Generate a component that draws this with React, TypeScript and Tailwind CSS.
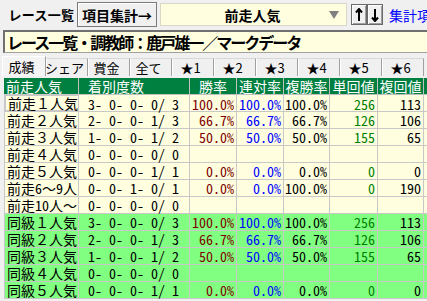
import React from "react";

type Row = {
  label: string;
  rec: string;
  win?: string;
  ren?: string;
  fuku?: string;
  tan?: string;
  fkv?: string;
  green?: boolean;
  selected?: boolean;
};

const rows: Row[] = [
  { label: "前走１人気", rec: "3- 0- 0- 0/ 3", win: "100.0%", ren: "100.0%", fuku: "100.0%", tan: "256", fkv: "113", selected: true },
  { label: "前走２人気", rec: "2- 0- 0- 1/ 3", win: "66.7%", ren: "66.7%", fuku: "66.7%", tan: "126", fkv: "106" },
  { label: "前走３人気", rec: "1- 0- 0- 1/ 2", win: "50.0%", ren: "50.0%", fuku: "50.0%", tan: "155", fkv: "65" },
  { label: "前走４人気", rec: "0- 0- 0- 0/ 0" },
  { label: "前走５人気", rec: "0- 0- 0- 1/ 1", win: "0.0%", ren: "0.0%", fuku: "0.0%", tan: "0", fkv: "0" },
  { label: "前走6〜9人", rec: "0- 0- 1- 0/ 1", win: "0.0%", ren: "0.0%", fuku: "100.0%", tan: "0", fkv: "190" },
  { label: "前走10人〜", rec: "0- 0- 0- 0/ 0" },
  { label: "同級１人気", rec: "3- 0- 0- 0/ 3", win: "100.0%", ren: "100.0%", fuku: "100.0%", tan: "256", fkv: "113", green: true },
  { label: "同級２人気", rec: "2- 0- 0- 1/ 3", win: "66.7%", ren: "66.7%", fuku: "66.7%", tan: "126", fkv: "106", green: true },
  { label: "同級３人気", rec: "1- 0- 0- 1/ 2", win: "50.0%", ren: "50.0%", fuku: "50.0%", tan: "155", fkv: "65", green: true },
  { label: "同級４人気", rec: "0- 0- 0- 0/ 0", green: true },
  { label: "同級５人気", rec: "0- 0- 0- 1/ 1", win: "0.0%", ren: "0.0%", fuku: "0.0%", tan: "0", fkv: "0", green: true },
];

const tabs = ["シェア", "賞金", "全て", "★1", "★2", "★3", "★4", "★5", "★6"];

const gridCols = "grid grid-cols-[75px_111px_47px_47px_46px_48px_46px_60px]";

export default function App() {
  return (
    <div className="w-[427px] h-[301px] overflow-hidden bg-[#f0f0f0] text-black font-['Noto_Sans_CJK_JP',sans-serif]">
      {/* top bar */}
      <div className="flex items-center h-[25px] mt-[2px] whitespace-nowrap w-[460px]">
        <div className="shrink-0 ml-[2px] w-[75px] h-[25px] flex items-center justify-center pl-[4px] font-bold text-[13px] tracking-[0.3px] leading-none bg-[#f0f0f0]">
          レース一覧
        </div>
        <div className="shrink-0 w-[80px] h-[25px] flex items-center justify-center font-bold text-[14px] leading-none bg-[#f0f0f0] border border-[#7a7a7a] shadow-[inset_1px_1px_0_#ffffff]">
          項目集計→
        </div>
        <div className="shrink-0 ml-[3px] w-[187px] h-[23px] flex items-center bg-[#ffffe0] border border-[#d8d8c8] relative">
          <span className="flex-1 text-center font-bold text-[14px] leading-none pr-[2px]">前走人気</span>
          <svg width="10" height="8" viewBox="0 0 10 8" className="absolute right-[7px] top-[7px]">
            <polygon points="0,0 10,0 5,8" fill="#808080" />
          </svg>
        </div>
        <div className="shrink-0 ml-[4px] w-[16px] h-[21px] flex items-center justify-center bg-[#f0f0f0] border border-[#6a6a6a] shadow-[inset_1px_1px_0_#ffffff,inset_-1px_-1px_0_#a0a0a0]">
          <svg width="8" height="14" viewBox="0 0 8 14">
            <path d="M4 1 L4 13 M1 4.5 L4 1 L7 4.5" stroke="#000" strokeWidth="2" fill="none" />
          </svg>
        </div>
        <div className="shrink-0 w-[16px] h-[21px] flex items-center justify-center bg-[#f0f0f0] border border-[#6a6a6a] shadow-[inset_1px_1px_0_#ffffff,inset_-1px_-1px_0_#a0a0a0]">
          <svg width="8" height="14" viewBox="0 0 8 14">
            <path d="M4 1 L4 13 M1 9.5 L4 13 L7 9.5" stroke="#000" strokeWidth="2" fill="none" />
          </svg>
        </div>
        <div className="shrink-0 ml-[6px] text-[14px] leading-none text-[#0000ff]">集計項目</div>
      </div>

      {/* title */}
      <div className="mt-[3px] ml-[3px] h-[23px] w-[430px] bg-[#ffffe0] border-t-2 border-l-2 border-b border-t-[#707070] border-l-[#707070] border-b-[#a0a0a0] flex items-center whitespace-nowrap">
        <span className="pl-[2px] font-bold text-[16px] tracking-[-2px] leading-none">
          レース一覧・調教師：鹿戸雄一／マークデータ
        </span>
      </div>

      {/* tabs */}
      <div className="mt-[3px] h-[20px] flex items-end pl-[2px] whitespace-nowrap text-[13px] leading-none w-[460px]">
        <div className="shrink-0 w-[44px] h-[20px] flex items-center justify-center pr-[5px] bg-[#f4f4f4] border-t border-l border-white border-r border-r-[#a0a0a0]">
          成績
        </div>
        {tabs.map((t) => (
          <div
            key={t}
            className="w-[42px] h-[18px] shrink-0 flex items-center justify-center pr-[5px] bg-[#f0f0f0] border-t border-t-[#d8d8d8] border-l border-l-white border-r border-r-[#a0a0a0]"
          >
            {t}
          </div>
        ))}
      </div>

      {/* table */}
      <div className="mt-[2px] ml-[4px] font-['Noto_Sans_Mono_CJK_JP','Noto_Sans_CJK_JP',monospace] text-[14px] leading-[14px] whitespace-pre">
        <div className={`${gridCols} h-[17px] bg-[#008040] text-white border-b border-[#c0c0c0]`}>
          <div className="pl-[2px] border-r border-[#c0c0c0] flex items-center">前走人気</div>
          <div className="pl-[9px] border-r border-[#c0c0c0] flex items-center">着別度数</div>
          <div className="border-r border-[#c0c0c0] flex items-center justify-center">勝率</div>
          <div className="border-r border-[#c0c0c0] flex items-center justify-center">連対率</div>
          <div className="border-r border-[#c0c0c0] flex items-center justify-center">複勝率</div>
          <div className="border-r border-[#c0c0c0] flex items-center justify-center">単回値</div>
          <div className="border-r border-[#c0c0c0] flex items-center justify-center">複回値</div>
          <div></div>
        </div>
        {rows.map((r) => (
          <div
            key={r.label}
            className={`${gridCols} h-[17px] border-b border-[#c8c8c8] ${r.green ? "bg-[#80ff80]" : "bg-[#ffffe0]"}`}
          >
            <div
              className={`pl-[2px] border-r border-[#c8c8c8] flex items-center ${r.selected ? "border-2 border-[#800000] -mt-px pl-[1px]" : "border-l border-l-[#c8c8c8]"}`}
            >
              {r.label}
            </div>
            <div className="pl-[9px] border-r border-[#c8c8c8] flex items-center">{r.rec}</div>
            <div className="pr-[2px] border-r border-[#c8c8c8] flex items-center justify-end text-[#800000]">{r.win ?? ""}</div>
            <div className="pr-[2px] border-r border-[#c8c8c8] flex items-center justify-end text-[#0000ff]">{r.ren ?? ""}</div>
            <div className="pr-[2px] border-r border-[#c8c8c8] flex items-center justify-end">{r.fuku ?? ""}</div>
            <div className="pr-[2px] border-r border-[#c8c8c8] flex items-center justify-end text-[#008000]">{r.tan ?? ""}</div>
            <div className="pr-[2px] border-r border-[#c8c8c8] flex items-center justify-end">{r.fkv ?? ""}</div>
            <div></div>
          </div>
        ))}
      </div>
    </div>
  );
}
